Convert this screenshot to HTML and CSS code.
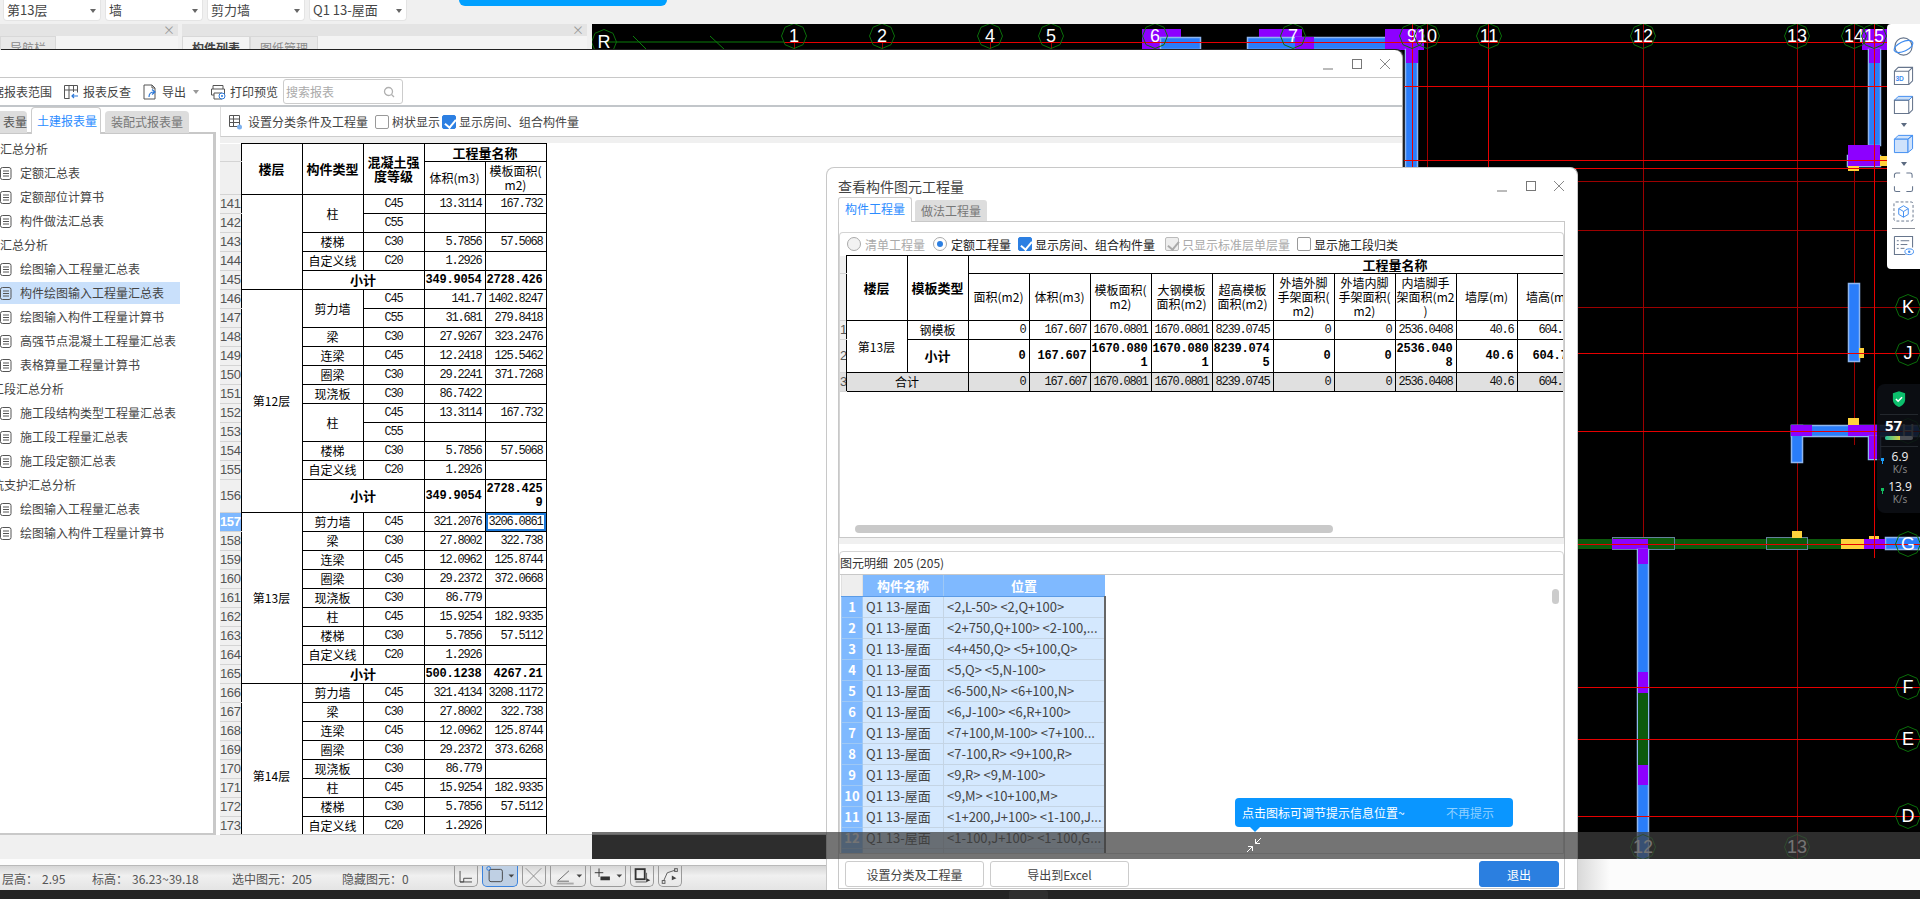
FILE: index.html
```html
<!DOCTYPE html>
<html lang="zh-CN">
<head>
<meta charset="utf-8">
<title>工程量报表</title>
<link rel="stylesheet" href="styles.css">
</head>
<body>
<svg class="defs" aria-hidden="true">
  <symbol id="doc" viewBox="0 0 12 13"><rect x="0.5" y="0.5" width="10.5" height="12" rx="2" fill="none" stroke="#555"/><path d="M3 4h6M3 6.5h6M3 9h6" stroke="#555"/></symbol>
  <symbol id="ctl" viewBox="0 0 70 14"><path d="M0 12h10" stroke="#777" fill="none"/><rect x="29.5" y="2.5" width="9" height="9" stroke="#777" fill="none"/><path d="M57 2l10 10M67 2L57 12" stroke="#888" fill="none"/></symbol>
</svg>
<div class="app">
  <header class="topbar">
    <div class="combo">第13层</div>
    <div class="combo">墙</div>
    <div class="combo">剪力墙</div>
    <div class="combo">Q1 13-屋面</div>
    <div class="pill"></div>
  </header>
  <main class="workspace">
    <aside class="panels">
      <section class="panel nav"><div class="panel-head">×</div><div class="panel-tabs"><span class="ptab">导航栏</span></div></section>
      <section class="panel list"><div class="panel-head">×</div><div class="panel-tabs"><span class="ptab on">构件列表</span><span class="ptab">图纸管理</span></div></section>
    </aside>
    <div class="cad">
      <svg class="cad-svg" viewBox="592 24 1328 835" width="1328" height="835">
        <defs><polygon id="ax" points="0,-12.5 9,-8.7 12.5,0 9,8.7 0,12.5 -9,8.7 -12.5,0 -9,-8.7"/></defs>
        <g class="ln-dark">
          <path d="M1427 24V170M1643 24V859M1797 24V859M1854 24V445M592 181H1920M592 230H1920M592 307H1920M794 42V50M882 42V50M990 42V50M1051 42V50"/>
        </g>
        <g class="ln-green"><path d="M604 42H784M633 36l14 14M710 36l15 14"/></g>
        <g class="walls">
          <rect class="p" x="1142" y="29" width="39" height="21"/>
          <rect class="w" x="1160.5" y="37.5" width="40" height="12"/>
          <rect class="p" x="1259" y="29" width="43" height="21"/>
          <rect class="w" x="1247.5" y="37.5" width="143" height="12"/>
          <rect class="p" x="1295" y="37" width="19" height="13"/>
          <rect class="p" x="1385" y="29" width="39" height="21"/>
          <rect class="w" x="1405.5" y="49.5" width="12" height="120"/>
          <rect class="p" x="1406" y="30" width="12" height="33"/>
          <rect class="p" x="1862" y="29" width="25" height="21"/>
          <rect class="w" x="1868.5" y="49.5" width="12" height="96"/>
          <rect class="p" x="1869" y="49" width="11" height="14"/>
          <rect class="w" x="1847.5" y="155.5" width="33" height="11"/>
          <rect class="p" x="1848" y="145" width="32" height="21"/>
          <rect class="y" x="1880" y="156" width="7" height="10"/>
          <rect class="y" x="1848" y="166" width="11" height="5"/>
          <rect class="w" x="1848.5" y="283.5" width="11" height="78"/>
          <rect class="y" x="1859" y="348" width="5" height="10"/>
          <rect class="w" x="1791.5" y="425.5" width="128.5" height="11"/>
          <rect class="w" x="1791.5" y="425.5" width="11" height="37"/>
          <rect class="p" x="1791" y="425" width="21" height="11"/>
          <rect class="p" x="1848" y="425" width="32" height="11"/>
          <rect class="w" x="1868.5" y="436.5" width="12" height="23"/>
          <rect class="p" x="1869" y="436" width="11" height="23"/>
          <rect class="y" x="1848" y="418" width="11" height="7"/>
          <rect class="g" x="1577" y="539" width="264" height="10"/>
          <rect class="w2" x="1612.5" y="537.5" width="62" height="12"/>
          <rect class="w2" x="1766.5" y="537.5" width="41" height="12"/>
          <rect class="p" x="1612" y="539" width="36" height="10"/>
          <rect class="w" x="1637.5" y="549.5" width="11" height="310"/>
          <rect class="p" x="1638" y="549" width="10" height="15"/>
          <rect class="p" x="1638" y="672" width="10" height="21"/>
          <rect class="g" x="1638" y="693" width="10" height="72"/>
          <rect class="p" x="1638" y="765" width="10" height="20"/>
          <rect class="y" x="1792" y="531" width="10" height="7"/>
          <rect class="y" x="1841" y="539" width="23" height="10"/>
          <rect class="w" x="1885.5" y="537.5" width="35" height="12"/>
          <rect class="p" x="1864" y="539" width="21" height="10"/>
          <rect class="y" x="1869" y="536" width="10" height="3"/>
        </g>
        <g class="ln-red">
          <path d="M784 42H1920M592 86H1920M592 160H1920M592 168H1920M592 353H1920M592 431H1920M592 544H1920M592 687H1920M592 739H1920M592 816H1920M1412 24V170M1488 24V167M1874 24V558"/>
        </g>
        <g class="axis">
          <use href="#ax" x="604" y="42"/><text x="604" y="48">R</text>
          <use href="#ax" x="794" y="36"/><text x="794" y="42">1</text>
          <use href="#ax" x="882" y="36"/><text x="882" y="42">2</text>
          <use href="#ax" x="990" y="36"/><text x="990" y="42">4</text>
          <use href="#ax" x="1051" y="36"/><text x="1051" y="42">5</text>
          <use href="#ax" x="1155" y="36"/><text x="1155" y="42">6</text>
          <use href="#ax" x="1293" y="36"/><text x="1293" y="42">7</text>
          <use href="#ax" x="1412" y="36"/><text x="1412" y="42">9</text>
          <use href="#ax" x="1427" y="36"/><text x="1427" y="42">10</text>
          <use href="#ax" x="1489" y="36"/><text x="1489" y="42">11</text>
          <use href="#ax" x="1643" y="36"/><text x="1643" y="42">12</text>
          <use href="#ax" x="1797" y="36"/><text x="1797" y="42">13</text>
          <use href="#ax" x="1854" y="36"/><text x="1854" y="42">14</text>
          <use href="#ax" x="1874" y="36"/><text x="1874" y="42">15</text>
          <use href="#ax" x="1908" y="307"/><text x="1908" y="313">K</text>
          <use href="#ax" x="1908" y="353"/><text x="1908" y="359">J</text>
          <use href="#ax" x="1908" y="431"/><text x="1908" y="437">H</text>
          <use href="#ax" x="1908" y="544"/><text x="1908" y="550">G</text>
          <use href="#ax" x="1908" y="687"/><text x="1908" y="693">F</text>
          <use href="#ax" x="1908" y="739"/><text x="1908" y="745">E</text>
          <use href="#ax" x="1908" y="816"/><text x="1908" y="822">D</text>
          <use href="#ax" x="1643" y="847"/><text x="1643" y="853">12</text>
          <use href="#ax" x="1797" y="847"/><text x="1797" y="853">13</text>
        </g>
      </svg>
      <div class="view-tools">
        <svg class="vt" viewBox="0 0 22 22"><ellipse cx="11" cy="11" rx="9" ry="9" fill="none" stroke="#66758c" stroke-width="1.2"/><ellipse cx="11" cy="11" rx="10.5" ry="5" transform="rotate(-25 11 11)" fill="none" stroke="#3e8cf0" stroke-width="1.2"/></svg>
        <svg class="vt" viewBox="0 0 22 22"><path d="M1.500 6.500h15v14h-15zM1.500 6.500l4-4h15v14l-4 4M16.500 6.500l4-4" fill="none" stroke="#66758c" stroke-width="1.100"/><text x="2.500" y="17" class="vt3d">3D</text></svg>
        <svg class="vt" viewBox="0 0 22 22"><path d="M1.500 6.500l4-4h15l-4 4z" fill="#c9def8" stroke="#3e8cf0"/><path d="M1.500 6.500h15v14h-15zM16.500 20.500l4-4v-14" fill="none" stroke="#66758c" stroke-width="1.100"/></svg>
        <span class="vt-arrow"></span>
        <svg class="vt" viewBox="0 0 22 22"><path d="M1.500 6.500l4-4h15l-5 4zM15.500 6.500l5-4v14l-5 4z" fill="#cfe2fb" stroke="#3e8cf0"/><path d="M1.500 6.500h14v14h-14z" fill="#cfe2fb" stroke="#3e8cf0"/></svg>
        <span class="vt-arrow"></span>
        <svg class="vt" viewBox="0 0 22 22"><path d="M1.500 6V3a2 2 0 0 1 2-2h4M14 1h4a2 2 0 0 1 2 2v3M20.500 15v3.500a2 2 0 0 1-2 2H14M7.500 20.500h-4a2 2 0 0 1-2-2V15" fill="none" stroke="#66758c" stroke-width="1.100"/></svg>
        <svg class="vt" viewBox="0 0 22 22"><rect x="1" y="1" width="20" height="20" rx="2" fill="none" stroke="#66758c" stroke-dasharray="3 2"/><path d="M11 5l5 3v6l-5 3-5-3V8zM6 8l5 3 5-3M11 11v6" fill="none" stroke="#3e8cf0"/></svg>
        <i class="vt-div"></i>
        <svg class="vt" viewBox="0 0 22 22"><path d="M1.500 1.500h19V13M13 20.500H1.500v-19" fill="none" stroke="#66758c" stroke-width="1.100"/><path d="M4 6h2M8 6h9M4 10h2M8 10h7M4 14h2M8 14h4" stroke="#66758c"/><ellipse cx="17" cy="17.500" rx="4.500" ry="3" fill="#fff" stroke="#3e8cf0"/><circle cx="17" cy="17.500" r="1.300" fill="#3e8cf0"/></svg>
      </div>
      <div class="netmon">
        <svg class="shield" viewBox="0 0 16 18"><path d="M8 0l7 2.500v7c0 4-3 7-7 8.500-4-1.500-7-4.500-7-8.500v-7z" fill="#0cbf6c"/><path d="M4.500 9l2.500 2.500 4.500-4.500" fill="none" stroke="#fff" stroke-width="1.800"/></svg>
        <div class="nm-sep"></div>
        <div class="nm-val">57</div>
        <div class="nm-bar"><span class="nm-fill"></span></div>
        <div class="nm-sep"></div>
        <div class="nm-rate"><i class="up"></i><span>6.9</span><small>K/s</small></div>
        <div class="nm-rate"><i class="down"></i><span>13.9</span><small>K/s</small></div>
      </div>
    </div>
  </main>
  <footer class="bottom">
    <div class="status">
      <span class="st w40">层高：</span><span class="st w50">2.95</span>
      <span class="st w40">标高：</span><span class="st w100">36.23~39.18</span>
      <span class="st w60">选中图元：</span><span class="st w50">205</span>
      <span class="st w60">隐藏图元：</span><span class="st w50">0</span>
      <div class="st-btns">
        <span class="sb s24"><svg viewBox="0 0 24 21"><path d="M5.500 5v12h4v-4h9M5.500 17h13" fill="none" stroke="#444"/></svg></span>
        <span class="sb s36 act"><svg viewBox="0 0 36 21"><rect x="6.500" y="3.500" width="14" height="13" rx="2" fill="none" stroke="#444"/><circle cx="6" cy="2.500" r="2" fill="none" stroke="#2c78d8"/><path d="M27 9h6l-3 3z" fill="#444"/></svg></span>
        <span class="sb s24"><svg viewBox="0 0 24 21"><path d="M3 2l17 17M20 2L3 19" stroke="#888"/></svg></span>
        <span class="sb s36"><svg viewBox="0 0 36 21"><path d="M7 16L19 5M7 16h12" stroke="#666" fill="none"/><path d="M6 18.500h18" stroke="#aaa" stroke-width="2"/><path d="M27 9h6l-3 3z" fill="#444"/></svg></span>
        <span class="sb s36"><svg viewBox="0 0 36 21"><path d="M4 7h9M8.500 2.500v9" stroke="#333"/><rect x="10" y="11" width="10" height="4" fill="#333"/><path d="M27 9h6l-3 3z" fill="#444"/></svg></span>
        <span class="sb s24"><svg viewBox="0 0 24 21"><rect x="5" y="3" width="10" height="11" fill="none" stroke="#333" stroke-width="2"/><path d="M5 17h12V7" stroke="#555" fill="none"/><path d="M17 13l4 2-4 2z" fill="#333"/></svg></span>
        <span class="sb s24"><svg viewBox="0 0 24 21"><path d="M5 16L9 7l9-3" fill="none" stroke="#555"/><rect x="3.500" y="15.500" width="3" height="3" fill="none" stroke="#555"/><rect x="17" y="2.500" width="3" height="3" fill="none" stroke="#555"/><path d="M14 10l5 3-5 2z" fill="#444"/></svg></span>
      </div>
    </div>
    <div class="bottom-fill"></div>
    <div class="bottom-fade"></div>
  </footer>
  <div class="taskbar"><span class="task-tab"></span></div>

  <!-- Report window -->
  <section class="report">
    <div class="win-title"><svg class="ctl"><use href="#ctl"/></svg></div>
    <div class="win-tools">
      <span class="cut">据报表范围</span>
      <svg class="ti" viewBox="0 0 16 16"><path d="M1.500 1.500h13v7M1.500 1.500v13h5M1.500 6h13M6 1.500v13M10.500 1.500V8" fill="none" stroke="#555"/><path d="M15 12H9m2-2l-2 2 2 2" fill="none" stroke="#2c78d8" stroke-width="1.200"/></svg>
      <span class="tt">报表反查</span>
      <svg class="ti" viewBox="0 0 16 16"><path d="M10 1H2v14h11V4zM10 1v3h3" fill="none" stroke="#555"/><path d="M7 13c0-4 2-5 5-5M10 5.500L13 8l-3 2.500" fill="none" stroke="#2c78d8" stroke-width="1.200"/></svg>
      <span class="tt">导出</span><i class="caret"></i>
      <svg class="ti" viewBox="0 0 16 16"><path d="M3 5V1.500h10V5M1.500 5h13v6H12M1.500 5v6H4M4 9h8v6H4z" fill="none" stroke="#555"/><circle cx="12" cy="12" r="3" fill="#fff" stroke="#2c78d8"/><circle cx="12" cy="12" r="1" fill="#2c78d8"/></svg>
      <span class="tt">打印预览</span>
      <div class="search"><span>搜索报表</span><svg viewBox="0 0 12 12"><circle cx="5.500" cy="5.500" r="4" fill="none" stroke="#b0b0b0" stroke-width="1.300"/><path d="M8.500 8.500l2.500 2.500" stroke="#b0b0b0" stroke-width="1.300"/></svg></div>
    </div>
    <div class="win-body">
      <div class="side">
        <div class="side-tabs">
          <span class="stab first">表量</span>
          <span class="stab on">土建报表量</span>
          <span class="stab">装配式报表量</span>
        </div>
        <ul class="tree">
          <li class="grp">汇总分析</li>
          <li><svg><use href="#doc"/></svg>定额汇总表</li>
          <li><svg><use href="#doc"/></svg>定额部位计算书</li>
          <li><svg><use href="#doc"/></svg>构件做法汇总表</li>
          <li class="grp">汇总分析</li>
          <li><svg><use href="#doc"/></svg>绘图输入工程量汇总表</li>
          <li class="sel"><svg><use href="#doc"/></svg>构件绘图输入工程量汇总表</li>
          <li><svg><use href="#doc"/></svg>绘图输入构件工程量计算书</li>
          <li><svg><use href="#doc"/></svg>高强节点混凝土工程量汇总表</li>
          <li><svg><use href="#doc"/></svg>表格算量工程量计算书</li>
          <li class="grp cutg">工段汇总分析</li>
          <li><svg><use href="#doc"/></svg>施工段结构类型工程量汇总表</li>
          <li><svg><use href="#doc"/></svg>施工段工程量汇总表</li>
          <li><svg><use href="#doc"/></svg>施工段定额汇总表</li>
          <li class="grp cutg">坑支护汇总分析</li>
          <li><svg><use href="#doc"/></svg>绘图输入工程量汇总表</li>
          <li><svg><use href="#doc"/></svg>绘图输入构件工程量计算书</li>
        </ul>
      </div>
      <div class="main">
        <div class="main-tools">
          <svg class="ti2" viewBox="0 0 14 16"><path d="M1.500 1.500h10v11h-10zM1.500 5h10M1.500 8.500h10M5.500 1.500v11" fill="none" stroke="#555"/><circle cx="11.500" cy="13" r="2.500" fill="#7db1ee"/></svg>
          <span class="lbl">设置分类条件及工程量</span>
          <span class="cb"></span><span class="lbl">树状显示</span>
          <span class="cb on tight"></span><span class="lbl">显示房间、组合构件量</span>
        </div>
        <div class="gray-band"></div>
        <div class="sheet">
          <table class="tb rep">
            <colgroup><col class="c21"><col class="c61"><col class="c61"><col class="c61"><col class="c61"><col class="c61"></colgroup>
            <tr class="h18"><td class="rh"></td><td rowspan="2" class="hb">楼层</td><td rowspan="2" class="hb">构件类型</td><td rowspan="2" class="hb">混凝土强<br>度等级</td><td colspan="2" class="hb">工程量名称</td></tr>
            <tr class="h33"><td class="rh"></td><td>体积(m3)</td><td>模板面积(<br>m2)</td></tr>
            <tr><td class="rh">141</td><td rowspan="5"></td><td rowspan="2">柱</td><td class="g">C45</td><td class="n">13.3114</td><td class="n">167.732</td></tr>
            <tr><td class="rh">142</td><td class="g">C55</td><td></td><td></td></tr>
            <tr><td class="rh">143</td><td>楼梯</td><td class="g">C30</td><td class="n">5.7856</td><td class="n">57.5068</td></tr>
            <tr><td class="rh">144</td><td>自定义线</td><td class="g">C20</td><td class="n">1.2926</td><td></td></tr>
            <tr><td class="rh">145</td><td colspan="2" class="hb">小计</td><td class="nb">349.9054</td><td class="nb">2728.426</td></tr>
            <tr><td class="rh">146</td><td rowspan="11">第12层</td><td rowspan="2">剪力墙</td><td class="g">C45</td><td class="n">141.7</td><td class="n">1402.8247</td></tr>
            <tr><td class="rh">147</td><td class="g">C55</td><td class="n">31.681</td><td class="n">279.8418</td></tr>
            <tr><td class="rh">148</td><td>梁</td><td class="g">C30</td><td class="n">27.9267</td><td class="n">323.2476</td></tr>
            <tr><td class="rh">149</td><td>连梁</td><td class="g">C45</td><td class="n">12.2418</td><td class="n">125.5462</td></tr>
            <tr><td class="rh">150</td><td>圈梁</td><td class="g">C30</td><td class="n">29.2241</td><td class="n">371.7268</td></tr>
            <tr><td class="rh">151</td><td>现浇板</td><td class="g">C30</td><td class="n">86.7422</td><td></td></tr>
            <tr><td class="rh">152</td><td rowspan="2">柱</td><td class="g">C45</td><td class="n">13.3114</td><td class="n">167.732</td></tr>
            <tr><td class="rh">153</td><td class="g">C55</td><td></td><td></td></tr>
            <tr><td class="rh">154</td><td>楼梯</td><td class="g">C30</td><td class="n">5.7856</td><td class="n">57.5068</td></tr>
            <tr><td class="rh">155</td><td>自定义线</td><td class="g">C20</td><td class="n">1.2926</td><td></td></tr>
            <tr class="h33"><td class="rh">156</td><td colspan="2" class="hb">小计</td><td class="nb">349.9054</td><td class="nb">2728.425<br>9</td></tr>
            <tr><td class="rh cur">157</td><td rowspan="9">第13层</td><td>剪力墙</td><td class="g">C45</td><td class="n">321.2076</td><td class="n cell-sel">3206.0861</td></tr>
            <tr><td class="rh">158</td><td>梁</td><td class="g">C30</td><td class="n">27.8002</td><td class="n">322.738</td></tr>
            <tr><td class="rh">159</td><td>连梁</td><td class="g">C45</td><td class="n">12.0962</td><td class="n">125.8744</td></tr>
            <tr><td class="rh">160</td><td>圈梁</td><td class="g">C30</td><td class="n">29.2372</td><td class="n">372.0668</td></tr>
            <tr><td class="rh">161</td><td>现浇板</td><td class="g">C30</td><td class="n">86.779</td><td></td></tr>
            <tr><td class="rh">162</td><td>柱</td><td class="g">C45</td><td class="n">15.9254</td><td class="n">182.9335</td></tr>
            <tr><td class="rh">163</td><td>楼梯</td><td class="g">C30</td><td class="n">5.7856</td><td class="n">57.5112</td></tr>
            <tr><td class="rh">164</td><td>自定义线</td><td class="g">C20</td><td class="n">1.2926</td><td></td></tr>
            <tr><td class="rh">165</td><td colspan="2" class="hb">小计</td><td class="nb">500.1238</td><td class="nb">4267.21</td></tr>
            <tr><td class="rh">166</td><td rowspan="9">第14层</td><td>剪力墙</td><td class="g">C45</td><td class="n">321.4134</td><td class="n">3208.1172</td></tr>
            <tr><td class="rh">167</td><td>梁</td><td class="g">C30</td><td class="n">27.8002</td><td class="n">322.738</td></tr>
            <tr><td class="rh">168</td><td>连梁</td><td class="g">C45</td><td class="n">12.0962</td><td class="n">125.8744</td></tr>
            <tr><td class="rh">169</td><td>圈梁</td><td class="g">C30</td><td class="n">29.2372</td><td class="n">373.6268</td></tr>
            <tr><td class="rh">170</td><td>现浇板</td><td class="g">C30</td><td class="n">86.779</td><td></td></tr>
            <tr><td class="rh">171</td><td>柱</td><td class="g">C45</td><td class="n">15.9254</td><td class="n">182.9335</td></tr>
            <tr><td class="rh">172</td><td>楼梯</td><td class="g">C30</td><td class="n">5.7856</td><td class="n">57.5112</td></tr>
            <tr><td class="rh">173</td><td>自定义线</td><td class="g">C20</td><td class="n">1.2926</td><td></td></tr>
            <tr class="h33"><td class="rh"></td><td colspan="2"></td><td></td><td></td></tr>
          </table>
        </div>
      </div>
    </div>
  </section>

  <!-- Component quantity dialog -->
  <section class="dialog">
    <div class="dlg-title"><span>查看构件图元工程量</span><svg class="ctl"><use href="#ctl"/></svg></div>
    <div class="dlg-tabs"><span class="dtab on">构件工程量</span><span class="dtab">做法工程量</span></div>
    <div class="dlg-body">
      <div class="upper">
        <div class="opts">
          <span class="radio off"></span><span class="lbl dim">清单工程量</span>
          <span class="radio on"></span><span class="lbl">定额工程量</span>
          <span class="cb on"></span><span class="lbl">显示房间、组合构件量</span>
          <span class="cb dis wide"></span><span class="lbl dim">只显示标准层单层量</span>
          <span class="cb"></span><span class="lbl">显示施工段归类</span>
        </div>
        <div class="upper-table">
          <table class="tb qty">
            <colgroup><col class="c7"><col class="c61"><col class="c61"><col class="c61"><col class="c61"><col class="c61"><col class="c61"><col class="c61"><col class="c61"><col class="c61"><col class="c61"><col class="c61"><col class="c61"><col class="c61"><col class="c61"><col class="c61"><col class="c61"></colgroup>
            <tr class="h18"><td class="rh"></td><td rowspan="2" class="hb">楼层</td><td rowspan="2" class="hb">模板类型</td><td colspan="14" class="hb">工程量名称</td></tr>
            <tr class="h47"><td class="rh"></td><td>面积(m2)</td><td>体积(m3)</td><td>模板面积(<br>m2)</td><td>大钢模板<br>面积(m2)</td><td>超高模板<br>面积(m2)</td><td>外墙外脚<br>手架面积(<br>m2)</td><td>外墙内脚<br>手架面积(<br>m2)</td><td>内墙脚手<br>架面积(m2<br>)</td><td>墙厚(m)</td><td>墙高(m)</td></tr>
            <tr><td class="rh l">1</td><td rowspan="2">第13层</td><td>钢模板</td><td class="n">0</td><td class="n">167.607</td><td class="n">1670.0801</td><td class="n">1670.0801</td><td class="n">8239.0745</td><td class="n">0</td><td class="n">0</td><td class="n">2536.0408</td><td class="n">40.6</td><td class="n">604.75</td></tr>
            <tr class="h33"><td class="rh l">2</td><td class="hb">小计</td><td class="nb">0</td><td class="nb">167.607</td><td class="nb">1670.080<br>1</td><td class="nb">1670.080<br>1</td><td class="nb">8239.074<br>5</td><td class="nb">0</td><td class="nb">0</td><td class="nb">2536.040<br>8</td><td class="nb">40.6</td><td class="nb">604.75</td></tr>
            <tr class="tot"><td class="rh l">3</td><td colspan="2">合计</td><td class="n">0</td><td class="n">167.607</td><td class="n">1670.0801</td><td class="n">1670.0801</td><td class="n">8239.0745</td><td class="n">0</td><td class="n">0</td><td class="n">2536.0408</td><td class="n">40.6</td><td class="n">604.75</td></tr>
          </table>
        </div>
        <div class="hscroll"></div>
      </div>
      <div class="split"></div>
      <div class="lower">
        <div class="lower-head">图元明细&nbsp;&nbsp;205 (205)</div>
        <div class="grid-wrap">
          <table class="grid">
            <colgroup><col class="c21"><col class="c81"><col class="c161"></colgroup>
            <tr class="gh"><th class="corner"></th><th>构件名称</th><th>位置</th></tr>
            <tr><th>1</th><td>Q1 13-屋面</td><td>&lt;2,L-50&gt; &lt;2,Q+100&gt;</td></tr>
            <tr><th>2</th><td>Q1 13-屋面</td><td>&lt;2+750,Q+100&gt; &lt;2-100,...</td></tr>
            <tr><th>3</th><td>Q1 13-屋面</td><td>&lt;4+450,Q&gt; &lt;5+100,Q&gt;</td></tr>
            <tr><th>4</th><td>Q1 13-屋面</td><td>&lt;5,Q&gt; &lt;5,N-100&gt;</td></tr>
            <tr><th>5</th><td>Q1 13-屋面</td><td>&lt;6-500,N&gt; &lt;6+100,N&gt;</td></tr>
            <tr><th>6</th><td>Q1 13-屋面</td><td>&lt;6,J-100&gt; &lt;6,R+100&gt;</td></tr>
            <tr><th>7</th><td>Q1 13-屋面</td><td>&lt;7+100,M-100&gt; &lt;7+100...</td></tr>
            <tr><th>8</th><td>Q1 13-屋面</td><td>&lt;7-100,R&gt; &lt;9+100,R&gt;</td></tr>
            <tr><th>9</th><td>Q1 13-屋面</td><td>&lt;9,R&gt; &lt;9,M-100&gt;</td></tr>
            <tr><th>10</th><td>Q1 13-屋面</td><td>&lt;9,M&gt; &lt;10+100,M&gt;</td></tr>
            <tr><th>11</th><td>Q1 13-屋面</td><td>&lt;1+200,J+100&gt; &lt;1-100,J...</td></tr>
            <tr><th>12</th><td>Q1 13-屋面</td><td>&lt;1-100,J+100&gt; &lt;1-100,G...</td></tr>
            <tr><th>13</th><td>Q1 13-屋面</td><td>&lt;1-100,G&gt; &lt;1+200,G...</td></tr>
          </table>
          <div class="vthumb"></div>
        </div>
      </div>
      <div class="dlg-foot">
        <button class="btn">设置分类及工程量</button>
        <button class="btn">导出到Excel</button>
        <button class="btn pri">退出</button>
      </div>
    </div>
  </section>

  <!-- Notification strip lying over everything -->
  <div class="strip">
    <svg class="strip-icon" viewBox="0 0 16 16"><path d="M15 1L9.500 6.500M9.500 2v4.500H14M1 15l5.500-5.500M2 9.500h4.500V14" fill="none" stroke="#fff"/></svg>
  </div>
  <div class="tip"><span>点击图标可调节提示信息位置~</span><span class="tip-off">不再提示</span></div>
</div>
</body>
</html>
```

FILE: styles.css
```css
* { box-sizing: border-box; }
html, body { margin: 0; padding: 0; }
body { width: 1920px; height: 899px; overflow: hidden; background: #fff; font-family: "Noto Sans CJK SC", "Noto Sans", sans-serif; font-size: 12px; color: #333; }
.defs { display: none; }
.app { position: relative; width: 1920px; height: 899px; overflow: hidden; display: flex; flex-direction: column; }

/* top bar */
.topbar { height: 24px; flex: none; background: #f0f0f0; display: flex; gap: 4px; padding-left: 3px; position: relative; }
.combo { width: 98px; height: 21px; background: #fff; border: 1px solid #e4e4e4; border-top: 0; border-radius: 0 0 4px 4px; font-size: 13px; line-height: 20px; padding-left: 3px; color: #444; position: relative; }
.combo::after { content: ""; position: absolute; right: 4px; top: 9px; border: 3px solid transparent; border-top: 4px solid #666; }
.pill { position: absolute; left: 459px; top: 0; width: 208px; height: 6px; background: #00a0ff; border-radius: 0 0 7px 7px; }

/* workspace */
.workspace { height: 835px; flex: none; display: flex; }
.panels { width: 592px; flex: none; background: #f0f0f0; display: flex; gap: 4px; padding-right: 5px; }
.panel { background: #f0f0f0; }
.panel.nav { width: 178px; }
.panel.list { flex: 1; }
.panel-head { height: 12px; background: #e4e4e4; text-align: right; padding-right: 3px; font-size: 12px; line-height: 12px; color: #999; }
.panel-tabs { display: flex; background: #f4f4f4; height: 14px; overflow: hidden; }
.ptab { padding: 2px 9px 0; color: #888; background: #e8e8e8; border: 1px solid #d8d8d8; }
.ptab.on { color: #444; background: #f4f4f4; font-weight: 700; }
.cad { flex: 1; position: relative; background: #000; overflow: hidden; }
.cad-svg { display: block; }
.ln-dark path { stroke: #9c0000; stroke-width: 1; fill: none; shape-rendering: crispEdges; }
.ln-red path { stroke: #e60000; stroke-width: 1; fill: none; shape-rendering: crispEdges; }
.ln-green path { stroke: #0a7d0a; stroke-width: 1; fill: none; }
.walls .p { fill: #8d00ff; }
.walls .w { fill: #2a7dfa; stroke: #8fb6ee; stroke-width: 1.5; }
.walls .w2 { fill: #0c5a0c; stroke: #64809c; }
.walls .g { fill: #0c5a0c; }
.walls .y { fill: #ffd23c; }
.axis use { fill: none; stroke: #0a6e0a; stroke-width: 1; }
.axis text { fill: #fff; font: 18px "Liberation Sans", sans-serif; text-anchor: middle; }

/* right view tool column */
.view-tools { position: absolute; right: 0; top: 0; width: 33px; height: 245px; background: #fff; border-radius: 4px 0 0 4px; display: flex; flex-direction: column; align-items: center; padding-top: 12px; }
.vt { width: 21px; height: 21px; flex: none; margin-bottom: 8px; }
.vt3d { font: 700 7px "Liberation Sans", sans-serif; fill: #3e8cf0; }
.vt-arrow { width: 0; height: 0; border: 3.500px solid transparent; border-top: 4px solid #5b6a80; margin: 0 0 3px; flex: none; }
.vt-div { width: 23px; height: 1px; background: #8a8f98; margin: -2px 0 6px; flex: none; }

/* network widget */
.netmon { position: absolute; right: 0; top: 360px; width: 43px; height: 129px; background: rgba(12, 15, 20, .88); border-radius: 8px 0 0 8px; display: flex; flex-direction: column; align-items: center; padding-top: 6px; color: #fff; }
.shield { width: 14px; height: 18px; flex: none; }
.nm-sep { width: 38px; height: 1px; background: #23272d; margin: 6px 0 1px; flex: none; }
.nm-val { font: 700 15px/19px "Open Sans", sans-serif; margin-left: -10px; }
.nm-bar { width: 28px; height: 4px; background: #4a4d52; border-radius: 2px; flex: none; margin-top: 1px; overflow: hidden; }
.nm-fill { display: block; width: 15px; height: 4px; background: linear-gradient(90deg, #20c0a0, #d8d040); }
.nm-rate { display: flex; flex-direction: column; align-items: center; font: 12px/13px "Open Sans", sans-serif; color: #f0f0f0; position: relative; height: 28px; width: 100%; padding-left: 3px; margin-top: 2px; }
.nm-rate small { font-size: 10px; line-height: 12px; color: #8a8a8a; }
.nm-rate i { position: absolute; left: 5px; top: 8px; width: 1px; height: 6px; }
.nm-rate i.up { background: #1aa0ff; }
.nm-rate i.down { background: #12c060; }
.nm-rate i::before { content: ""; position: absolute; left: -1px; width: 3px; height: 3px; background: inherit; }

/* bottom */
.bottom { height: 31px; flex: none; display: flex; background: #fcfcfc; }
.status { width: 827px; flex: none; margin-top: 6px; height: 25px; display: flex; align-items: center; padding-left: 2px; background: linear-gradient(#d6d6d6, #f0f0f0 40%, #e4e4e4); border-top: 1px solid #b9b9b9; font-size: 12px; color: #555; }
.st { display: block; white-space: nowrap; flex: none; }
.w40 { width: 40px; } .w50 { width: 50px; } .w60 { width: 60px; } .w100 { width: 100px; }
.st-btns { margin-left: 0; display: flex; gap: 4px; align-self: flex-start; position: relative; left: 2px; }
.sb { display: block; height: 21px; border: 1px solid #9a9a9a; border-top: 0; border-radius: 0 0 5px 5px; flex: none; }
.sb svg { display: block; width: 100%; height: 100%; }
.s24 { width: 24px; } .s36 { width: 36px; }
.sb.act { border-color: #3a82dc; background: #bfd0e4; }
.bottom-fill { width: 750px; flex: none; }
.bottom-fade { flex: 1; background: linear-gradient(90deg, #d8d8d8, #fcfcfc 33px); }
.taskbar { flex: 1; background: #232323; position: relative; }
.task-tab { position: absolute; left: 1009px; top: 0; width: 39px; height: 9px; background: #2e2e2e; border-radius: 3px 3px 0 0; }

/* report window */
.report { position: absolute; left: 0; top: 50px; width: 1403px; height: 785px; background: #fff; border-right: 1px solid #a8a8a8; border-radius: 0 8px 0 0; display: flex; flex-direction: column; box-shadow: 1px -1px 0 #222; }
.win-title { height: 28px; flex: none; border-bottom: 1px solid #c8c8c8; display: flex; justify-content: flex-end; align-items: center; padding-right: 9px; }
.ctl { width: 70px; height: 14px; flex: none; }
.win-tools { height: 29px; flex: none; border-bottom: 2px solid #c2c6ca; display: flex; align-items: center; font-size: 12px; color: #444; overflow: hidden; }
.cut { width: 52px; flex: none; overflow: hidden; direction: rtl; white-space: nowrap; }
.ti { width: 16px; height: 16px; flex: none; margin-left: 11px; }
.tt { margin-left: 4px; white-space: nowrap; flex: none; }
.caret { width: 0; height: 0; border: 3px solid transparent; border-top: 4px solid #999; margin: 3px 0 0 7px; flex: none; }
.search { width: 120px; height: 25px; margin-left: 5px; flex: none; border: 1px solid #ccc; border-radius: 3px; color: #aaa; display: flex; justify-content: space-between; align-items: center; padding: 0 7px 0 2px; font-size: 12px; }
.search svg { width: 12px; height: 12px; }
.win-body { flex: 1; min-height: 0; display: flex; }
.side { width: 216px; flex: none; display: flex; flex-direction: column; }
.side-tabs { height: 27px; flex: none; display: flex; gap: 4px; padding-top: 1px; border-bottom: 2px solid #c8c8c8; align-items: flex-end; }
.stab { height: 22px; background: #ddd; color: #777; padding: 0 6px; line-height: 22px; font-size: 12px; border-radius: 4px 4px 0 0; white-space: nowrap; margin-bottom: -1px; width: 84px; text-align: center; }
.stab.first { width: 27px; padding: 0; text-align: right; border-radius: 0 4px 0 0; color: #555; }
.stab.on { height: 27px; line-height: 25px; background: #fff; color: #2b8cff; border: 1px solid #ccc; border-bottom: 0; margin-bottom: -2px; padding: 0 5px; width: 70px; }
.tree { list-style: none; margin: 0; padding: 3px 0 0; flex: 1; border-right: 3px solid #c9c9c9; border-bottom: 2px solid #c9c9c9; font-size: 12px; color: #444; }
.tree li { height: 24px; line-height: 24px; display: flex; align-items: center; white-space: nowrap; overflow: hidden; padding-left: 0; }
.tree li svg { width: 12px; height: 13px; flex: none; margin-right: 8px; }
.tree li.grp { padding-left: 0; }
.tree li.cutg { text-indent: -8px; }
.tree li.sel { width: 180px; background: #c9e0fb; height: 22px; margin: 1px 0; }
.main { flex: 1; min-width: 0; margin-left: 4px; display: flex; flex-direction: column; }
.main-tools { height: 30px; flex: none; display: flex; align-items: center; padding-left: 7px; border-left: 1px solid #ddd; border-bottom: 1px solid #ccc; }
.ti2 { width: 14px; height: 16px; flex: none; margin-right: 6px; }
.lbl { white-space: nowrap; flex: none; color: #444; }
.lbl.dim { color: #a8a8a8; }
.cb { width: 14px; height: 14px; border: 1px solid #999; border-radius: 2px; flex: none; margin: 0 3px 0 7px; position: relative; background: #fff; }
.cb.tight { margin-left: 2px; }
.cb.wide { margin-left: 10px; }
.cb.on, .cb.dis { background: #2c7fe2; border-color: #2c7fe2; }
.cb.dis { background: #eee; border-color: #bbb; }
.cb.on::after, .cb.dis::after { content: ""; position: absolute; left: 4px; top: 1px; width: 5px; height: 9px; border: solid #fff; border-width: 0 2px 2px 0; transform: rotate(40deg); }
.cb.dis::after { border-color: #aaa; }
.gray-band { height: 6px; flex: none; background: #f0f0f0; }
.sheet { flex: 1; min-height: 0; overflow: hidden; border-bottom: 1px solid #c8c8c8; }

/* sheet tables */
.tb { border-collapse: collapse; table-layout: fixed; background: #fff; color: #000; }
.rep { width: 326px; }
.qty { width: 983px; margin-left: -1px; }
.c7 { width: 7px; } .c21 { width: 21px; } .c61 { width: 61px; } .c81 { width: 81px; } .c161 { width: 161px; }
.tb tr { height: 19px; }
.tb tr.h18 { height: 18px; }
.tb tr.h33 { height: 33px; }
.tb tr.h47 { height: 47px; }
.tb td { border: 1px solid #000; padding: 0; text-align: center; font-size: 12px; line-height: 14px; overflow: hidden; white-space: nowrap; }
.tb td.rh { background: #f0f0f0; border: 0; border-bottom: 1px solid #d4d4d4; border-right: 1px solid #000; color: #555; font: 13px/14px "Liberation Sans", sans-serif; letter-spacing: -.4px; text-align: center; }
.tb td.rh.cur { background: #7fb9ff; color: #fff; font-weight: 700; }
.tb td.rh.l { text-align: left; padding-left: 1px; letter-spacing: 0; }
.tb td.hb { font-size: 13px; font-weight: 700; }
.tb td.g, .tb td.n { font-family: "Liberation Mono", monospace; letter-spacing: -1.200px; color: #111; }
.tb td.n { text-align: right; padding-right: 3px; }
.tb td.nb { font-family: "Liberation Mono", monospace; font-weight: 700; letter-spacing: -.200px; text-align: right; padding-right: 3px; }
.tb td.cell-sel { box-shadow: inset 0 0 0 2px #1c78d8; }
.tb tr.tot td { background: #e0e0e0; }

/* dialog */
.dialog { position: absolute; left: 826px; top: 167px; width: 752px; height: 723px; background: #fff; border: 1px solid #c8c8c8; border-bottom: 0; border-radius: 8px 8px 0 0; display: flex; flex-direction: column; }
.dlg-title { height: 27px; flex: none; display: flex; justify-content: space-between; align-items: center; padding: 8px 10px 0 11px; font-size: 14px; color: #444; }
.dlg-tabs { height: 26px; flex: none; display: flex; gap: 3px; padding-left: 11px; align-items: flex-end; }
.dtab { height: 21px; width: 72px; background: #ddd; color: #777; text-align: center; line-height: 21px; border-radius: 3px 3px 0 0; }
.dtab.on { height: 25px; width: 74px; background: #fff; color: #2b8cff; border: 1px solid #ccc; border-bottom: 0; line-height: 22px; position: relative; top: 1px; }
.dlg-body { flex: 1; min-height: 0; margin: 0 12px 1px 11px; border: 1px solid #c8c8c8; padding-top: 10px; display: flex; flex-direction: column; }
.upper { height: 305px; flex: none; border: 1px solid #d4d4d4; border-bottom: 0; border-radius: 4px 4px 0 0; margin: 0; display: flex; flex-direction: column; }
.opts { height: 22px; flex: none; display: flex; align-items: center; padding-left: 7px; }
.opts .lbl { color: #222; }
.opts .lbl.dim { color: #aaa; }
.opts .radio:first-child { margin-left: 0; }
.radio { width: 14px; height: 14px; border: 1px solid #aaa; border-radius: 50%; flex: none; margin: 0 4px 0 8px; position: relative; background: #fff; }
.radio.off { background: #f2f2f2; }
.radio.on::after { content: ""; position: absolute; left: 3px; top: 3px; width: 6px; height: 6px; border-radius: 50%; background: #2c7fe2; }
.upper-table { height: 270px; flex: none; overflow: hidden; }
.hscroll { height: 8px; width: 478px; flex: none; margin-left: 15px; background: #c9c9c9; border-radius: 4px; }
.split { height: 14px; flex: none; border-top: 1px solid #c8c8c8; background: linear-gradient(#f0f0f0 6px, #fff 6px); }
.lower { flex: 1; min-height: 0; border: 1px solid #d4d4d4; border-radius: 4px 4px 0 0; display: flex; flex-direction: column; }
.lower-head { height: 23px; flex: none; line-height: 21px; padding-left: 0; color: #333; border-bottom: 1px solid #c8c8c8; }
.grid-wrap { flex: 1; min-height: 0; overflow: hidden; position: relative; padding-left: 1px; }
.grid { border-collapse: collapse; table-layout: fixed; width: 263px; font-size: 13px; }
.grid tr { height: 21px; }
.grid th { background: #7fb9ff; color: #fff; font-weight: 700; font-size: 13px; padding: 0; border: 1px solid #9ec8f5; border-top: 0; }
.grid th.corner { background: #eee; border-color: #e0e0e0; }
.grid .gh th { border-bottom: 1px solid #5b9be6; }
.grid td { background: #d4e8fe; color: #444; border: 1px solid #c4d4e4; border-top: 0; padding: 0 0 0 3px; white-space: nowrap; overflow: hidden; line-height: 14px; }
.grid td:last-child { border-right: 2px solid #666; }
.grid .gh th:last-child { border-right: 1px solid #7fb9ff; }
.vthumb { position: absolute; left: 712px; top: 14px; width: 7px; height: 15px; background: #ccc; border-radius: 4px; }
.dlg-foot { height: 34px; flex: none; display: flex; gap: 6px; padding: 7px 5px 0 6px; }
.btn { width: 139px; height: 26px; padding: 0; background: #fff; border: 1px solid #ccc; border-radius: 3px; font: 12px "Noto Sans CJK SC", sans-serif; color: #444; }
.btn.pri { width: 80px; margin-left: auto; background: #2b7fe0; border-color: #2b7fe0; color: #fff; }

/* overlays */
.strip { position: absolute; left: 592px; top: 832px; width: 1328px; height: 27px; background: rgba(62, 62, 62, .72); }
.strip-icon { position: absolute; left: 654px; top: 5px; width: 16px; height: 16px; }
.tip { position: absolute; left: 1235px; top: 798px; width: 278px; height: 29px; background: #0a96ff; border-radius: 4px; color: #fff; display: flex; align-items: center; justify-content: space-between; padding: 0 19px 0 7px; white-space: nowrap; }
.tip::after { content: ""; position: absolute; left: 15px; top: 29px; border: 5px solid transparent; border-top: 5px solid #0a96ff; border-bottom: 0; }
.tip-off { color: #8fd0ff; }
```
